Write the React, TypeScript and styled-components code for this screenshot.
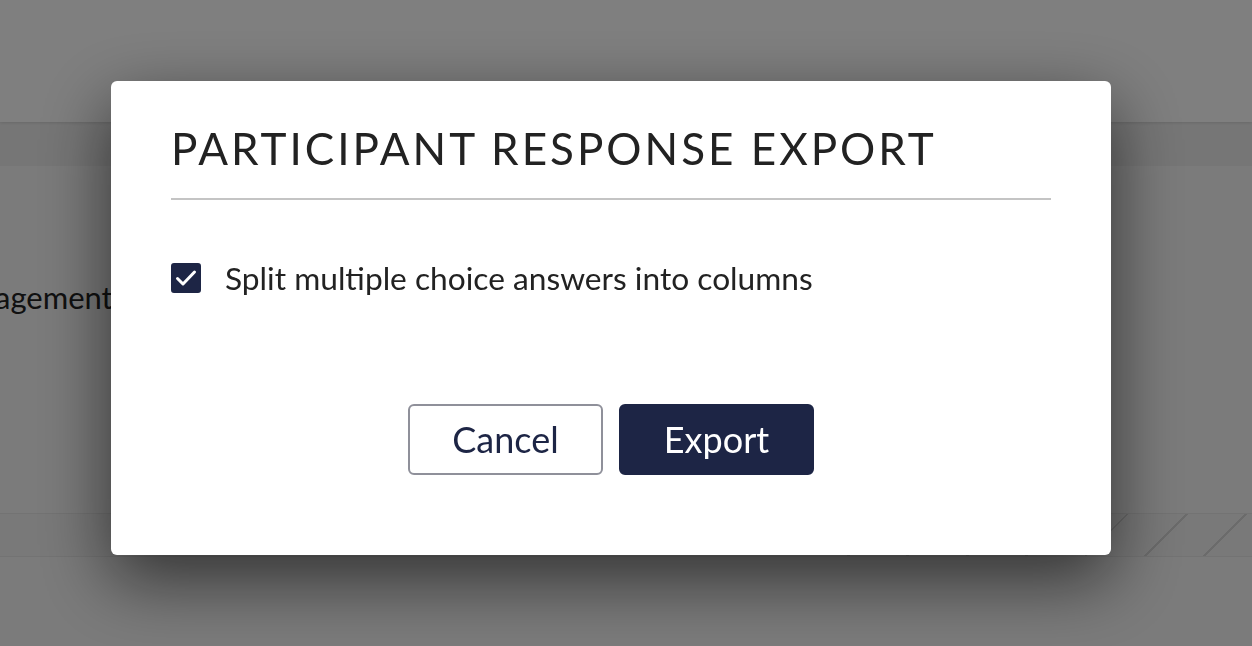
import React, { useState } from "react";
import styled, { createGlobalStyle } from "styled-components";

const GlobalStyle = createGlobalStyle`
  html, body {
    margin: 0;
    padding: 0;
    height: 100%;
    overflow: hidden;
  }
  body {
    font-family: Lato, "Noto Sans", "Liberation Sans", sans-serif;
    background: #fff;
  }
  * {
    box-sizing: border-box;
  }
`;

const Page = styled.div`
  height: 646px;
  display: flex;
  flex-direction: column;
  background: #f6f6f6;
`;

const Header = styled.div`
  height: 122px;
  background: #fefefe;
  box-shadow: 0 1px 3px rgba(0, 0, 0, 0.12);
  position: relative;
  z-index: 1;
`;

const SubBar = styled.div`
  height: 44px;
  background: #ededed;
`;

const Content = styled.div`
  height: 347px;
  background: #f6f6f6;
  padding-top: 112px;
  overflow: hidden;
`;

const ContentTitle = styled.div`
  font-size: 31px;
  color: #222;
  margin-left: -66px;
  white-space: nowrap;
`;

const ProgressBand = styled.div`
  height: 44px;
  display: flex;
  background: #f2f2f2;
  border-top: 1px solid #e6e6e6;
  border-bottom: 1px solid #e6e6e6;
`;

const Stripes = styled.div`
  margin-left: auto;
  width: 420px;
  background: repeating-linear-gradient(
    135deg,
    transparent 0,
    transparent 40px,
    #d6d6d6 40px,
    #d6d6d6 42px
  );
`;

const Footer = styled.div`
  flex: 1;
  background: #f6f6f6;
`;

const Overlay = styled.div`
  position: fixed;
  inset: 0;
  background: rgba(0, 0, 0, 0.5);
  display: flex;
  align-items: flex-start;
  padding: 81px 0 0 111px;
  z-index: 10;
`;

const Modal = styled.div`
  width: 1000px;
  background: #fff;
  border-radius: 6px;
  padding: 41px 60px 80px;
  box-shadow: 0 24px 70px rgba(0, 0, 0, 0.6);
`;

const Title = styled.h1`
  margin: 0;
  padding-bottom: 23px;
  border-bottom: 2px solid #c4c4c4;
  font-size: 44px;
  line-height: 1.2;
  font-weight: 400;
  letter-spacing: 3px;
  color: #222;
  text-transform: uppercase;
`;

const OptionRow = styled.label`
  display: flex;
  align-items: center;
  gap: 24px;
  margin-top: 60px;
  cursor: pointer;
`;

const Box = styled.span<{ $checked: boolean }>`
  width: 30px;
  height: 30px;
  flex: none;
  border-radius: 3px;
  display: flex;
  align-items: center;
  justify-content: center;
  background: ${(p) => (p.$checked ? "#1d2545" : "#fff")};
  border: 2px solid #1d2545;
`;

const OptionText = styled.span`
  font-size: 31.7px;
  line-height: 36px;
  color: #222;
`;

const Actions = styled.div`
  display: flex;
  justify-content: center;
  gap: 16px;
  margin-top: 108px;
`;

const Button = styled.button<{ $primary?: boolean }>`
  width: 195px;
  height: 71px;
  border-radius: 6px;
  font-family: inherit;
  font-size: 36px;
  font-weight: 400;
  cursor: pointer;
  border: 2px solid ${(p) => (p.$primary ? "#1d2545" : "#8f909a")};
  background: ${(p) => (p.$primary ? "#1d2545" : "#fff")};
  color: ${(p) => (p.$primary ? "#fff" : "#1d2545")};
`;

function Check() {
  return (
    <svg width="24" height="24" viewBox="0 0 24 24" fill="none">
      <path d="M3.5 12.5l5.5 5.5L20.5 6" stroke="#fff" strokeWidth="3" strokeLinecap="round" strokeLinejoin="round" />
    </svg>
  );
}

export default function App() {
  const [split, setSplit] = useState(true);
  return (
    <>
      <GlobalStyle />
      <Page>
        <Header />
        <SubBar />
        <Content>
          <ContentTitle>Management</ContentTitle>
        </Content>
        <ProgressBand>
          <Stripes />
        </ProgressBand>
        <Footer />
      </Page>
      <Overlay>
        <Modal>
          <Title>Participant Response Export</Title>
          <OptionRow onClick={() => setSplit(!split)}>
            <Box $checked={split}>{split && <Check />}</Box>
            <OptionText>Split multiple choice answers into columns</OptionText>
          </OptionRow>
          <Actions>
            <Button>Cancel</Button>
            <Button $primary>Export</Button>
          </Actions>
        </Modal>
      </Overlay>
    </>
  );
}
